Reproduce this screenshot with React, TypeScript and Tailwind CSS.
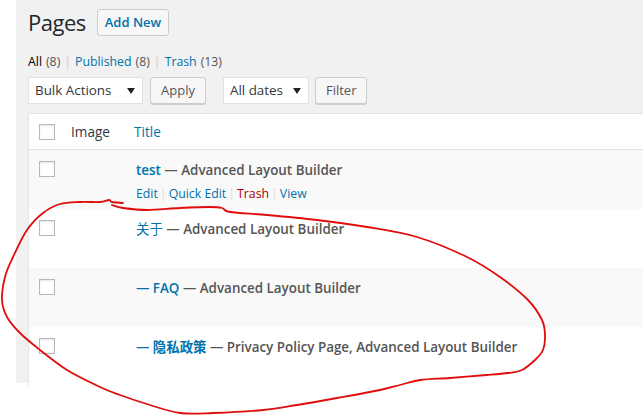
import React from "react";

const font = { fontFamily: '"Open Sans", "Noto Sans", "Noto Sans CJK SC", sans-serif' };

type Row = {
  title: React.ReactNode;
  state: string;
  actions?: boolean;
};

const rows: Row[] = [
  { title: "test", state: "Advanced Layout Builder", actions: true },
  { title: <span className="font-normal">关于</span>, state: "Advanced Layout Builder" },
  { title: "— FAQ", state: "Advanced Layout Builder" },
  { title: "— 隐私政策", state: "Privacy Policy Page, Advanced Layout Builder" },
];

// red hand-drawn loop over the list
const loop: [number, number][] = [
  [112, 205], [123, 208], [147, 210], [180, 208], [210, 207], [222, 208], [230, 212], [267, 215],
  [317, 220], [367, 227], [417, 237], [467, 257], [500, 277], [528, 300], [542, 320], [545, 335],
  [543, 350], [535, 360], [522, 370], [508, 373], [487, 375], [450, 378], [420, 380], [400, 385],
  [380, 390], [337, 398], [297, 405], [263, 410], [213, 413], [180, 413], [150, 405], [120, 395],
  [100, 387], [67, 370], [40, 350], [20, 333], [7, 317], [2, 300], [5, 277], [13, 257], [27, 230],
  [43, 213], [60, 204], [80, 202], [100, 202], [109, 200], [112, 202], [123, 203],
];

function smooth(pts: [number, number][]) {
  let d = `M${pts[0][0]},${pts[0][1]}`;
  for (let i = 0; i < pts.length - 1; i++) {
    const p0 = pts[i - 1] || pts[i];
    const p1 = pts[i];
    const p2 = pts[i + 1];
    const p3 = pts[i + 2] || p2;
    const c1x = p1[0] + (p2[0] - p0[0]) / 6;
    const c1y = p1[1] + (p2[1] - p0[1]) / 6;
    const c2x = p2[0] - (p3[0] - p1[0]) / 6;
    const c2y = p2[1] - (p3[1] - p1[1]) / 6;
    d += ` C${c1x.toFixed(1)},${c1y.toFixed(1)} ${c2x.toFixed(1)},${c2y.toFixed(1)} ${p2[0]},${p2[1]}`;
  }
  return d;
}

function Checkbox() {
  return <div className="w-4 h-4 bg-white border border-[#b4b9be] shadow-[inset_0_1px_2px_rgba(0,0,0,0.1)]" />;
}

function Select({ label, width }: { label: string; width: string }) {
  return (
    <div className={`${width} h-[27px] bg-white border border-[#e2e2e2] flex items-center justify-between pl-[6px] pr-[7px] text-[13.4px] text-[#32373c]`}>
      <span>{label}</span>
      <svg width="8" height="6" viewBox="0 0 8 6">
        <path d="M0 0h8L4 6z" fill="#222" />
      </svg>
    </div>
  );
}

function Button({ children, className = "" }: { children: React.ReactNode; className?: string }) {
  return (
    <div className={`h-[27px] flex items-center px-[10px] bg-[#f7f7f7] border border-[#cccccc] rounded-[3px] shadow-[0_1px_0_#cccccc] text-[13px] text-[#555] ${className}`}>
      {children}
    </div>
  );
}

export default function App() {
  return (
    <div className="relative w-[643px] h-[415px] bg-white overflow-hidden" style={font}>
      <div className="ml-4 h-[383px] bg-[#f1f1f1] pl-3 pt-[9px]">
        <div className="flex items-center h-[27px]">
          <h1 className="text-[22px] tracking-[-0.5px] leading-[27px] text-[#23282d] font-normal">Pages</h1>
          <div className="ml-[11px] h-[27px] px-[7px] flex items-center border border-[#ccc] bg-[#f7f7f7] rounded-[3px] text-[13px] font-semibold text-[#0073aa]">
            Add New
          </div>
        </div>

        <div className="mt-[16px] h-[20px] flex items-center text-[12.3px] text-[#555]">
          <span className="text-black">All</span>
          <span className="ml-1">(8)</span>
          <span className="mx-[4px] text-[#ccc]">|</span>
          <span className="text-[#0073aa]">Published</span>
          <span className="ml-1">(8)</span>
          <span className="mx-[4px] text-[#ccc]">|</span>
          <span className="text-[#0073aa]">Trash</span>
          <span className="ml-1">(13)</span>
        </div>

        <div className="mt-[5px] flex items-center">
          <Select label="Bulk Actions" width="w-[115px]" />
          <Button className="ml-[7px]">Apply</Button>
          <Select label="All dates" width="w-[86px] ml-[17px]" />
          <Button className="ml-[6px]">Filter</Button>
        </div>

        <div className="mt-[9px] bg-white border-t border-l border-[#e5e5e5]">
          <div className="flex h-[36px] border-b border-[#e1e1e1] items-center">
            <div className="w-[32px] pl-[10px]">
              <Checkbox />
            </div>
            <div className="w-[63px] pl-[10px] pt-[2px] text-[13.6px] text-[#32373c]">Image</div>
            <div className="pl-[10px] pt-[2px] text-[13.6px] text-[#0073aa]">Title</div>
          </div>
          {rows.map((r, i) => (
            <div key={i} className={`flex h-[59px] ${i % 2 === 0 ? "bg-[#f9f9f9]" : "bg-white"}`}>
              <div className="w-[32px] pl-[10px] pt-[11px]">
                <Checkbox />
              </div>
              <div className="w-[63px]" />
              <div className="pl-[12px] pt-[10px]">
                <div className="text-[13.4px] leading-[20px] font-semibold text-[#555] whitespace-nowrap">
                  <span className="text-[#0073aa]">{r.title}</span> — {r.state}
                </div>
                {r.actions && (
                  <div className="mt-[4px] leading-[20px] text-[12.3px] text-[#0073aa] flex items-center">
                    <span>Edit</span>
                    <span className="mx-[2px] text-[#ddd]">|</span>
                    <span>Quick Edit</span>
                    <span className="mx-[2px] text-[#ddd]">|</span>
                    <span className="text-[#a00]">Trash</span>
                    <span className="mx-[2px] text-[#ddd]">|</span>
                    <span>View</span>
                  </div>
                )}
              </div>
            </div>
          ))}
        </div>
      </div>

      <svg className="absolute left-0 top-0 pointer-events-none" width="643" height="415" viewBox="0 0 643 415">
        <path d={smooth(loop)} fill="none" stroke="#e00d0d" strokeWidth="1.8" strokeLinecap="round" strokeLinejoin="round" />
      </svg>
    </div>
  );
}
